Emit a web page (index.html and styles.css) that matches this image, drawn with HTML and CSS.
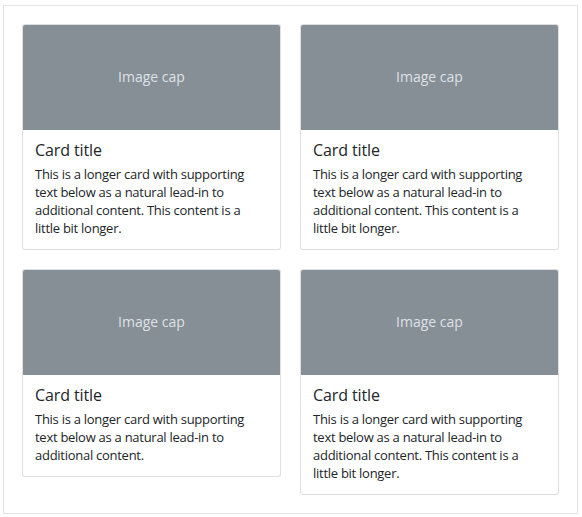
FILE: index.html
```html
<!DOCTYPE html>
<html>
<head>
<meta charset="utf-8">
<link rel="stylesheet" href="styles.css">
</head>
<body>
<div class="frame">
  <div class="grid">
    <div class="card">
      <div class="cap">Image cap</div>
      <div class="card-body">
        <h5 class="card-title">Card title</h5>
        <p class="card-text">This is a longer card with supporting text below as a natural lead-in to additional content. This content is a little bit longer.</p>
      </div>
    </div>
    <div class="card">
      <div class="cap">Image cap</div>
      <div class="card-body">
        <h5 class="card-title">Card title</h5>
        <p class="card-text">This is a longer card with supporting text below as a natural lead-in to additional content. This content is a little bit longer.</p>
      </div>
    </div>
    <div class="card">
      <div class="cap">Image cap</div>
      <div class="card-body">
        <h5 class="card-title">Card title</h5>
        <p class="card-text">This is a longer card with supporting text below as a natural lead-in to additional content.</p>
      </div>
    </div>
    <div class="card">
      <div class="cap">Image cap</div>
      <div class="card-body">
        <h5 class="card-title">Card title</h5>
        <p class="card-text">This is a longer card with supporting text below as a natural lead-in to additional content. This content is a little bit longer.</p>
      </div>
    </div>
  </div>
</div>
</body>
</html>
```
FILE: styles.css
```css
html, body {
  margin: 0;
  padding: 0;
  background: #fff;
}
body {
  padding: 5px 0 0 3px;
  font-family: "Open Sans", "Noto Sans", sans-serif;
  color: #212529;
}
.frame {
  width: 575px;
  box-sizing: border-box;
  border: 1px solid #e3e3e3;
  padding: 18px;
}
.grid {
  display: grid;
  grid-template-columns: 259px 259px;
  column-gap: 19px;
  row-gap: 19px;
  align-items: start;
}
.card {
  border: 1px solid rgba(0, 0, 0, 0.125);
  border-radius: 3px;
  overflow: hidden;
  background: #fff;
}
.cap {
  height: 105px;
  background: #868e96;
  color: #dee2e6;
  display: flex;
  align-items: center;
  justify-content: center;
  font-size: 14px;
  padding-bottom: 2px;
  box-sizing: border-box;
}
.card-title {
  margin: 0 0 5px;
  font-size: 16px;
  line-height: 19px;
  font-weight: 400;
  letter-spacing: -0.1px;
}
.card-body {
  padding: 11px 12px 12px;
}
.card-text {
  margin: 0;
  font-size: 13px;
  line-height: 18px;
  letter-spacing: -0.27px;
}
```
